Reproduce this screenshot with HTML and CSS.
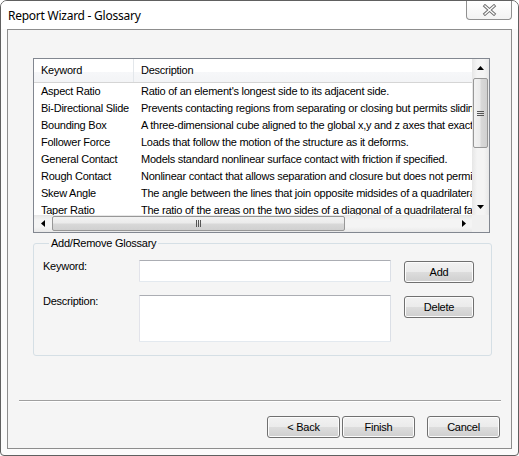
FILE: index.html
```html
<!DOCTYPE html>
<html>
<head>
<meta charset="utf-8">
<link rel="stylesheet" href="styles.css">
</head>
<body>
<div class="window">
  <div class="titlebar">
    <div class="title">Report Wizard - Glossary</div>
    <div class="close">
      <svg width="15" height="12" viewBox="0 0 15 12">
        <path d="M3 2 L12 10 M12 2 L3 10" stroke="#707070" stroke-width="3.2" stroke-linecap="square" fill="none"/>
        <path d="M3 2 L12 10 M12 2 L3 10" stroke="#ffffff" stroke-width="1.3" stroke-linecap="square" fill="none"/>
      </svg>
    </div>
  </div>
  <div class="client">
    <div class="list">
      <div class="list-content">
        <div class="lv-header">
          <div class="col-key hcell">Keyword</div>
          <div class="col-desc hcell">Description</div>
        </div>
        <div class="lv-row"><div class="col-key">Aspect Ratio</div><div class="col-desc">Ratio of an element's longest side to its adjacent side.</div></div>
        <div class="lv-row"><div class="col-key">Bi-Directional Slide</div><div class="col-desc">Prevents contacting regions from separating or closing but permits sliding in both directions.</div></div>
        <div class="lv-row"><div class="col-key">Bounding Box</div><div class="col-desc">A three-dimensional cube aligned to the global x,y and z axes that exactly encloses the model.</div></div>
        <div class="lv-row"><div class="col-key">Follower Force</div><div class="col-desc">Loads that follow the motion of the structure as it deforms.</div></div>
        <div class="lv-row"><div class="col-key">General Contact</div><div class="col-desc">Models standard nonlinear surface contact with friction if specified.</div></div>
        <div class="lv-row"><div class="col-key">Rough Contact</div><div class="col-desc">Nonlinear contact that allows separation and closure but does not permit sliding.</div></div>
        <div class="lv-row"><div class="col-key">Skew Angle</div><div class="col-desc">The angle between the lines that join opposite midsides of a quadrilateral element.</div></div>
        <div class="lv-row"><div class="col-key">Taper Ratio</div><div class="col-desc">The ratio of the areas on the two sides of a diagonal of a quadrilateral face.</div></div>
      </div>
      <div class="vscroll">
        <div class="sb-btn"><svg width="7" height="4" viewBox="0 0 7 4"><path d="M0 4 L3.5 0 L7 4 Z" fill="#000"/></svg></div>
        <div class="vtrack">
          <div class="vthumb">
            <svg width="7" height="7" viewBox="0 0 7 7"><path d="M0 1.5 H7 M0 3.5 H7 M0 5.5 H7" stroke="#555" stroke-width="1"/></svg>
          </div>
        </div>
        <div class="sb-btn"><svg width="7" height="4" viewBox="0 0 7 4"><path d="M0 0 L3.5 4 L7 0 Z" fill="#000"/></svg></div>
      </div>
      <div class="hscroll">
        <div class="sb-btn"><svg width="4" height="7" viewBox="0 0 4 7"><path d="M4 0 L0 3.5 L4 7 Z" fill="#000"/></svg></div>
        <div class="htrack">
          <div class="hthumb">
            <svg width="7" height="7" viewBox="0 0 7 7"><path d="M1.5 0 V7 M3.5 0 V7 M5.5 0 V7" stroke="#555" stroke-width="1"/></svg>
          </div>
        </div>
        <div class="sb-btn"><svg width="4" height="7" viewBox="0 0 4 7"><path d="M0 0 L4 3.5 L0 7 Z" fill="#000"/></svg></div>
      </div>
      <div class="corner"></div>
    </div>

    <fieldset class="group">
      <legend>Add/Remove Glossary</legend>
      <div class="form">
        <div class="label">Keyword:</div>
        <div class="textbox"></div>
        <button class="btn">Add</button>
        <div class="label">Description:</div>
        <div class="textbox tall"></div>
        <button class="btn">Delete</button>
      </div>
    </fieldset>

    <div class="separator"></div>

    <div class="footer">
      <button class="btn wide">&lt; Back</button>
      <button class="btn wide">Finish</button>
      <button class="btn wide cancel">Cancel</button>
    </div>
  </div>
</div>
</body>
</html>
```

FILE: styles.css
```css
* { box-sizing: border-box; }
html, body { margin: 0; padding: 0; background: #ffffff; }
body {
  width: 519px;
  height: 456px;
  overflow: hidden;
  font-family: "Liberation Sans", Arial, sans-serif;
  font-size: 11px;
  letter-spacing: -0.25px;
  color: #000;
}
.window {
  width: 519px;
  height: 456px;
  border: 1px solid #606060;
  border-radius: 7px 7px 4px 4px;
  background: #fbfbfb;
  display: flex;
  flex-direction: column;
}
.titlebar {
  height: 28px;
  display: flex;
  justify-content: space-between;
  align-items: flex-start;
  padding-left: 7px;
  background: #ffffff;
  border-radius: 6px 6px 0 0;
}
.title {
  font-family: "Noto Sans", "Open Sans", sans-serif;
  font-size: 12px;
  letter-spacing: -0.25px;
  line-height: 16px;
  margin-top: 7px;
  color: #000;
}
.close {
  width: 46px;
  height: 19px;
  margin-right: 6px;
  border: 1px solid #909090;
  border-top: none;
  border-radius: 0 0 4px 4px;
  background: linear-gradient(#ffffff, #f3f3f3);
  display: flex;
  align-items: center;
  justify-content: center;
}
.client {
  margin: 0 6px;
  height: 420px;
  border: 1px solid #8d8d8d;
  background: #f5f5f5;
  padding-top: 28px;
}

/* list view */
.list {
  margin-left: 25px;
  width: 457px;
  height: 175px;
  border: 1px solid #828790;
  background: #fff;
  display: grid;
  grid-template-columns: 1fr 17px;
  grid-template-rows: 1fr 17px;
}
.list-content {
  overflow: hidden;
  white-space: nowrap;
}
.lv-header {
  display: flex;
  height: 24px;
  border-bottom: 1px solid #d5d5d5;
  background: linear-gradient(#ffffff 0%, #ffffff 55%, #f6f7f9 56%, #f3f4f6 100%);
}
.lv-header .hcell {
  line-height: 23px;
}
.lv-header .col-key {
  border-right: 1px solid #e3e7eb;
}
.col-key {
  width: 100px;
  flex: none;
  padding-left: 7px;
}
.col-desc {
  padding-left: 7px;
  flex: none;
}
.lv-row {
  display: flex;
  height: 17px;
  line-height: 17px;
}
.vscroll {
  display: flex;
  flex-direction: column;
  background: linear-gradient(90deg, #e6e6e6, #f4f4f4 30%, #f4f4f4 70%, #e8e8e8);
}
.sb-btn {
  width: 17px;
  height: 17px;
  flex: none;
  display: flex;
  align-items: center;
  justify-content: center;
}
.vtrack {
  flex: 1;
  padding: 2px 1px 0 1px;
}
.vthumb {
  height: 70px;
  border: 1px solid #979797;
  border-radius: 2px;
  background: linear-gradient(90deg, #f2f2f2, #ebebeb 45%, #d8d8d8 55%, #d0d0d0);
  display: flex;
  align-items: center;
  justify-content: center;
}
.hscroll {
  display: flex;
  background: linear-gradient(#e6e6e6, #f4f4f4 30%, #f4f4f4 70%, #e8e8e8);
}
.htrack {
  flex: 1;
  padding: 1px 0 1px 1px;
}
.hthumb {
  width: 293px;
  height: 15px;
  border: 1px solid #979797;
  border-radius: 2px;
  background: linear-gradient(#f2f2f2, #ebebeb 45%, #d8d8d8 55%, #d0d0d0);
  display: flex;
  align-items: center;
  justify-content: center;
}
.corner { background: #f0f0f0; }

/* group box */
.group {
  margin: 4px 0 0 25px;
  width: 459px;
  padding: 10px 0 13px 9px;
  border: 1px solid #d5dfe5;
  border-radius: 3px;
  min-inline-size: 0;
}
.group legend {
  padding: 0 2px;
  margin-left: 6px;
  line-height: 13px;
  font-size: 11px;
}
.form {
  display: grid;
  grid-template-columns: 96px 252px 83px;
  row-gap: 12px;
  align-items: start;
}
.label {
  line-height: 13px;
  padding-top: 0;
}
.textbox {
  height: 22px;
  background: #fff;
  border: 1px solid #e3e9ef;
  border-top-color: #abadb3;
  border-left-color: #e2e3ea;
  border-right-color: #dbdfe6;
  border-radius: 1px;
}
.textbox.tall { height: 47px; }

.btn {
  font-family: "Liberation Sans", Arial, sans-serif;
  font-size: 11px;
  letter-spacing: -0.25px;
  color: #000;
  height: 22px;
  padding: 0;
  margin-top: 1px;
  border: 1px solid #707070;
  border-radius: 3px;
  background: linear-gradient(#f2f2f2 0%, #ebebeb 49%, #dddddd 50%, #cfcfcf 100%);
  box-shadow: inset 0 0 0 1px #fcfcfc;
}
.form .btn { width: 70px; height: 22px; margin-left: 13px; }

.separator {
  margin: 44px 10px 0 11px;
  height: 2px;
  border-top: 1px solid #a0a0a0;
  border-bottom: 1px solid #ffffff;
}
.footer {
  display: flex;
  justify-content: flex-end;
  gap: 2px;
  margin: 14px 11px 0 0;
}
.btn.wide { width: 73px; margin-top: 0; }
.btn.cancel { margin-left: 10px; }
```
